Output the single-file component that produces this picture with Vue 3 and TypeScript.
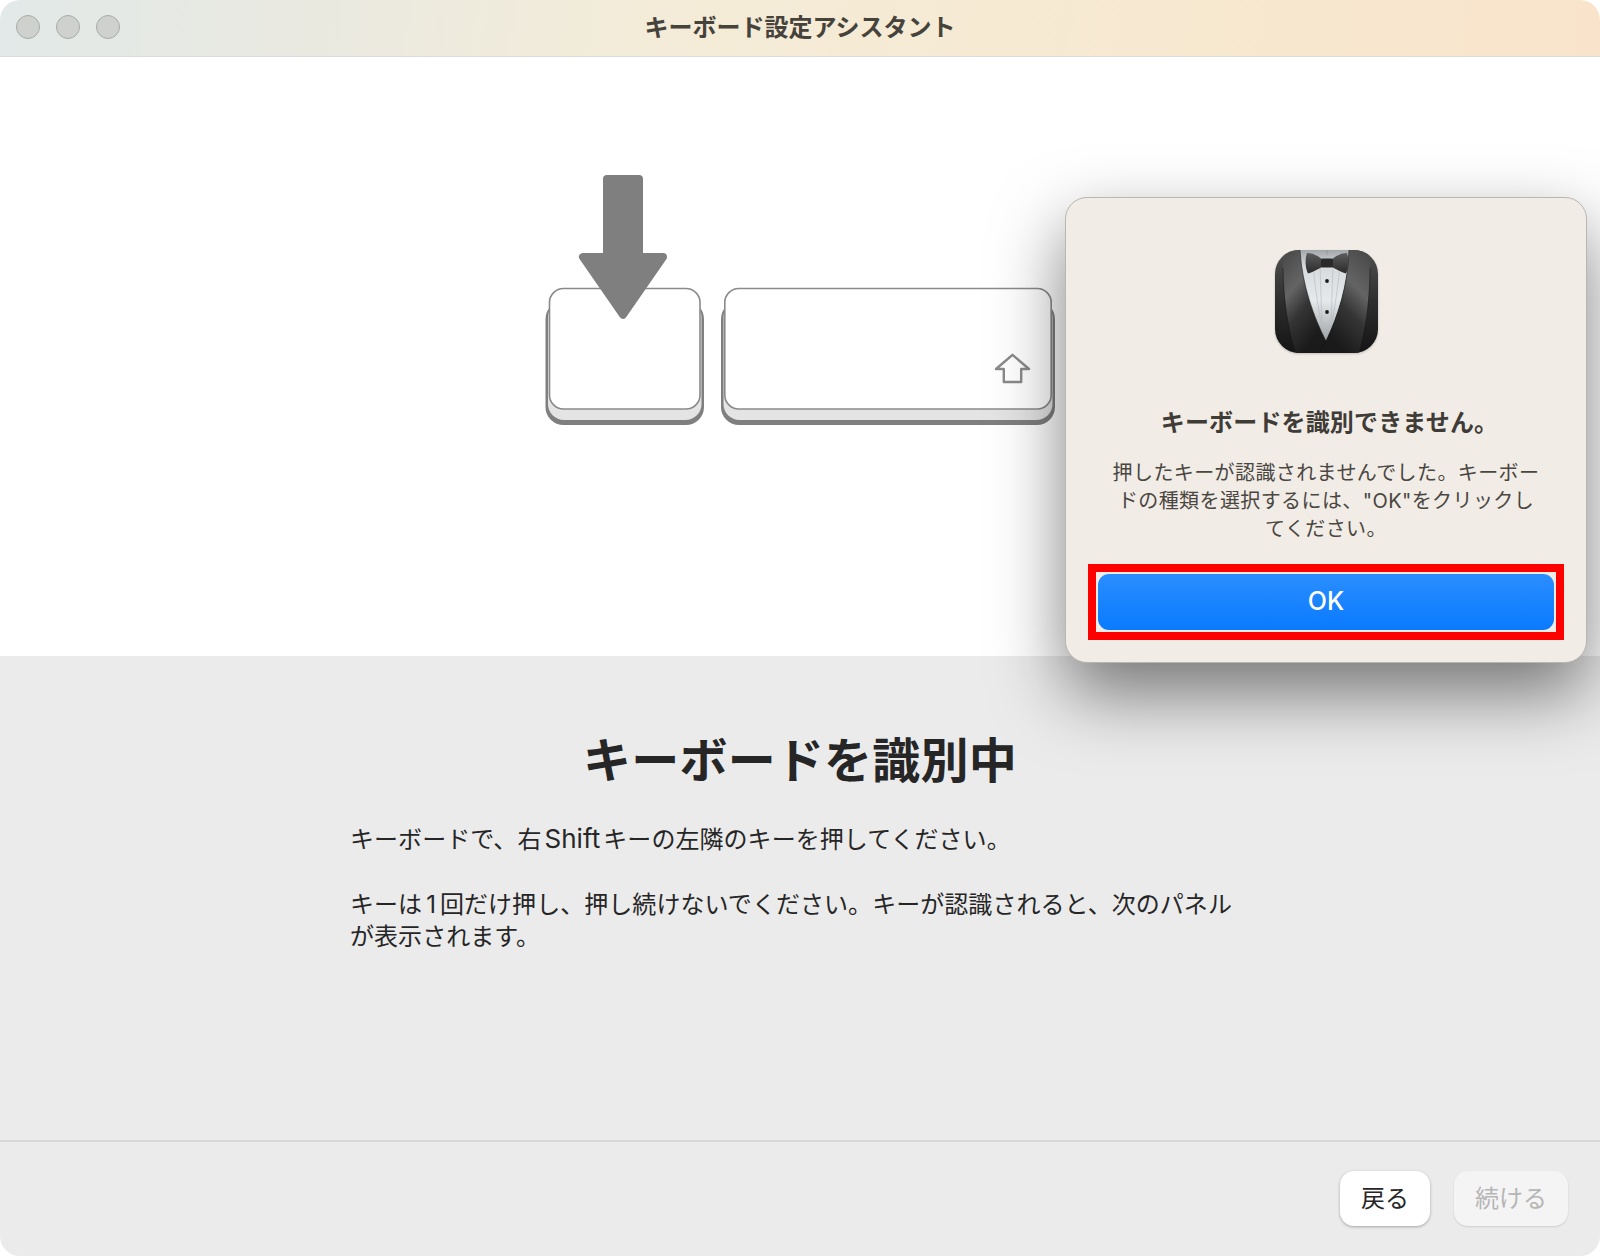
<script setup lang="ts">
const trafficLights: number[] = [1, 2, 3]
</script>

<template>
  <div class="window">
    <header class="titlebar">
      <div class="lights">
        <span v-for="n in trafficLights" :key="n" class="light"></span>
      </div>
      <div class="title">キーボード設定アシスタント</div>
    </header>

    <section class="hero">
      <svg class="keys" width="520" height="260" viewBox="0 0 520 260">
        <g>
          <rect x="5.5" y="131" width="158.5" height="124" rx="18" fill="#7f7f7f" />
          <rect x="8" y="131" width="153.5" height="119" rx="16" fill="#e4e4e4" />
          <rect x="9.5" y="118.5" width="150.5" height="120.5" rx="14" fill="#fff" stroke="#8a8a8a" stroke-width="1.6" />
        </g>
        <g>
          <rect x="181" y="131" width="334" height="124" rx="18" fill="#7f7f7f" />
          <rect x="183.5" y="131" width="329" height="119" rx="16" fill="#e4e4e4" />
          <rect x="184.8" y="118.5" width="326.4" height="120.5" rx="14" fill="#fff" stroke="#8a8a8a" stroke-width="1.6" />
        </g>
        <path
          d="M472.5 184.8 L489 199 L481.2 199 L481.2 212 L463.8 212 L463.8 199 L456 199 Z"
          fill="#fff"
          stroke="#8a8a8a"
          stroke-width="2.4"
          stroke-linejoin="round"
        />
        <rect x="63" y="5" width="40" height="90" rx="4" fill="#7f7f7f" />
        <path
          d="M43 87 L123 87 L83 144.7 Z"
          fill="#7f7f7f"
          stroke="#7f7f7f"
          stroke-width="8"
          stroke-linejoin="round"
        />
      </svg>
    </section>

    <section class="panel">
      <h1 class="heading">キーボードを識別中</h1>
      <div class="copy">
        <p>キーボードで、右<span class="latin shift">Shift</span>キーの左隣のキーを押してください。</p>
        <p>キーは<span class="latin one">1</span>回だけ押し、押し続けないでください。キーが認識されると、次のパネルが表示されます。</p>
      </div>
    </section>

    <footer class="footer">
      <button class="btn back" type="button">戻る</button>
      <button class="btn next" type="button" disabled>続ける</button>
    </footer>

    <div class="dialog">
      <svg class="app-icon" width="103" height="103" viewBox="0 0 103 103">
        <defs>
          <clipPath id="squircle"><rect width="103" height="103" rx="24" /></clipPath>
          <linearGradient id="jacket" x1="0" y1="0" x2="0" y2="1">
            <stop offset="0" stop-color="#505050" />
            <stop offset="0.5" stop-color="#2e2e2e" />
            <stop offset="1" stop-color="#141414" />
          </linearGradient>
          <linearGradient id="lapelL" x1="0" y1="0.1" x2="0.45" y2="1">
            <stop offset="0" stop-color="#4c4c4c" />
            <stop offset="0.35" stop-color="#646464" />
            <stop offset="0.62" stop-color="#353535" />
            <stop offset="1" stop-color="#1a1a1a" />
          </linearGradient>
          <linearGradient id="lapelR" x1="1" y1="0.1" x2="0.55" y2="1">
            <stop offset="0" stop-color="#4c4c4c" />
            <stop offset="0.35" stop-color="#646464" />
            <stop offset="0.62" stop-color="#353535" />
            <stop offset="1" stop-color="#1a1a1a" />
          </linearGradient>
          <linearGradient id="shirt" x1="0" y1="0" x2="0" y2="1">
            <stop offset="0" stop-color="#a4a7aa" />
            <stop offset="0.18" stop-color="#d8dbde" />
            <stop offset="0.55" stop-color="#e6e9ec" />
            <stop offset="1" stop-color="#9fa2a5" />
          </linearGradient>
          <linearGradient id="tie" x1="0" y1="0" x2="0" y2="1">
            <stop offset="0" stop-color="#5c5c5c" />
            <stop offset="1" stop-color="#2b2b2b" />
          </linearGradient>
        </defs>
        <g clip-path="url(#squircle)">
          <rect width="103" height="103" fill="url(#jacket)" />
          <path d="M8 0 C7 40 12 75 21 103 L46 103 L51 91 C38 68 27 35 25 0 Z" fill="url(#lapelL)" />
          <path d="M25 0 L74 0 C73 35 63 66 51 91 C39 68 27 35 25 0 Z" fill="url(#shirt)" />
          <g stroke="#b4b8bc" stroke-width="0.6" fill="none">
            <path d="M38 12 C39 30 42 50 46 72" />
            <path d="M45 14 L47 78" />
            <path d="M58 14 L56 78" />
            <path d="M65 12 C64 30 61 50 57 72" />
          </g>
          <path d="M95 0 C96 40 92 75 84 103 L43 103 L51 91 C63 66 73 35 74 0 Z" fill="url(#lapelR)" />
          <path d="M51 91 L44 103" stroke="#111" stroke-width="0.7" />
          <path d="M25 0 C27 35 39 68 51 91" stroke="#222" stroke-width="0.6" fill="none" />
          <path d="M74 0 C73 35 63 66 51 91" stroke="#222" stroke-width="0.6" fill="none" />
          <path d="M8 18 C8 50 13 78 20 103" stroke="#1c1c1c" stroke-width="0.6" fill="none" />
          <path d="M95 18 C95 50 91 78 84 103" stroke="#1c1c1c" stroke-width="0.6" fill="none" />
          <path d="M52 0 L52 5" stroke="#8a8d90" stroke-width="0.6" />
          <path d="M32 3 C38 3 43 6 47 9 L47 17 C43 19 38 22 33 23.5 C30 17 30 9 32 3 Z" fill="url(#tie)" />
          <path d="M72 3 C66 3 61 6 57 9 L57 17 C61 19 66 22 71 23.5 C74 17 74 9 72 3 Z" fill="url(#tie)" />
          <rect x="46" y="8.5" width="12" height="9" rx="1.5" fill="#2a2a2a" />
          <circle cx="52" cy="31" r="1.9" fill="#1c1c1c" />
          <circle cx="52" cy="62" r="1.9" fill="#1c1c1c" />
        </g>
      </svg>
      <h2 class="dialog-title">キーボードを識別できません。</h2>
      <p class="dialog-text">押したキーが認識されませんでした。キーボー<br />ドの種類を選択するには、<span class="latin quote">"OK"</span>をクリックし<br />てください。</p>
      <div class="highlight">
        <button class="ok" type="button">OK</button>
      </div>
    </div>
  </div>
</template>

<style>
html,
body {
  margin: 0;
  background: #fff;
}
</style>

<style scoped>
.window {
  position: relative;
  width: 1600px;
  height: 1256px;
  display: flex;
  flex-direction: column;
  border-radius: 20px;
  overflow: hidden;
  font-family: "Noto Sans CJK JP", "Noto Sans", sans-serif;
  background: #fff;
}

.latin {
  font-family: Inter, "Noto Sans CJK JP", sans-serif;
  line-height: 1;
}

.shift {
  font-size: 26px;
  margin: 0 3px;
}

.one {
  margin: 0 4px;
}

.quote {
  font-weight: 400;
}

.titlebar {
  position: relative;
  flex: none;
  height: 56px;
  box-sizing: content-box;
  display: flex;
  align-items: center;
  justify-content: center;
  background: linear-gradient(98deg, #e2e9e8 0%, #e9e9e1 18%, #f4ecd8 42%, #f6ead3 62%, #f9e4cb 100%);
  border-bottom: 1px solid #dcdcdc;
}

.lights {
  position: absolute;
  left: 16px;
  top: 15px;
  display: flex;
  gap: 16px;
}

.light {
  width: 22px;
  height: 22px;
  border-radius: 50%;
  background: #cfd1ce;
  border: 1px solid #a9aba8;
}

.title {
  font-size: 24px;
  font-weight: 700;
  line-height: 32px;
  color: #46433c;
  padding-bottom: 4px;
}

.hero {
  flex: none;
  height: 599px;
  box-sizing: border-box;
  padding: 113px 0 0 540px;
  background: #fff;
}

.keys {
  display: block;
}

.panel {
  flex: 1;
  background: #ebebeb;
  padding-top: 71px;
  box-sizing: border-box;
}

.heading {
  margin: 0;
  text-align: center;
  font-size: 48px;
  line-height: 60px;
  font-weight: 700;
  letter-spacing: 0.2px;
  color: #262626;
}

.copy {
  width: 900px;
  margin: 35px auto 0;
  font-size: 24px;
  line-height: 32px;
  letter-spacing: 0.05px;
  color: #262626;
}

.copy p {
  margin: 0 0 33px;
}

.footer {
  flex: none;
  height: 116px;
  box-sizing: border-box;
  display: flex;
  justify-content: flex-end;
  align-items: center;
  gap: 24px;
  padding: 0 32px 2px 0;
  background: #ebebeb;
  border-top: 2px solid #d8d8d8;
}

.btn {
  height: 55px;
  border: none;
  border-radius: 14px;
  font-family: inherit;
  font-size: 24px;
  padding: 0 0 4px;
}

.back {
  width: 90px;
  background: #fff;
  color: #262626;
  box-shadow: 0 1px 3px rgba(0, 0, 0, 0.3);
}

.next {
  width: 114px;
  background: #f4f4f4;
  color: #b6b6b6;
  box-shadow: 0 1px 2px rgba(0, 0, 0, 0.12);
}

.dialog {
  position: absolute;
  left: 1065px;
  top: 197px;
  width: 522px;
  height: 466px;
  box-sizing: border-box;
  display: flex;
  flex-direction: column;
  align-items: center;
  padding-top: 52px;
  background: #f1ece6;
  border: 1px solid #b9b6b1;
  border-radius: 22px;
  box-shadow: 0 30px 70px rgba(0, 0, 0, 0.5);
}

.app-icon {
  display: block;
  flex: none;
  filter: drop-shadow(0 1px 1px rgba(0, 0, 0, 0.2));
}

.dialog-title {
  margin: 52px 0 0 7px;
  font-size: 24px;
  line-height: 32px;
  font-weight: 700;
  letter-spacing: 0.15px;
  color: #3f3b36;
}

.dialog-text {
  margin: 21px 0 0;
  text-align: center;
  font-size: 20px;
  line-height: 28px;
  letter-spacing: 0.4px;
  color: #4a4641;
}

.highlight {
  margin-top: 22px;
  width: 476px;
  height: 76px;
  box-sizing: border-box;
  border: 8px solid #ff0000;
  padding: 2px;
}

.ok {
  display: block;
  width: 100%;
  height: 100%;
  border: none;
  border-radius: 11px;
  background: linear-gradient(180deg, #2a8eff 0%, #0a7aff 100%);
  color: #fff;
  font-family: Inter, "Noto Sans CJK JP", sans-serif;
  font-size: 25px;
  font-weight: 500;
  padding: 0 0 2px;
}
</style>
